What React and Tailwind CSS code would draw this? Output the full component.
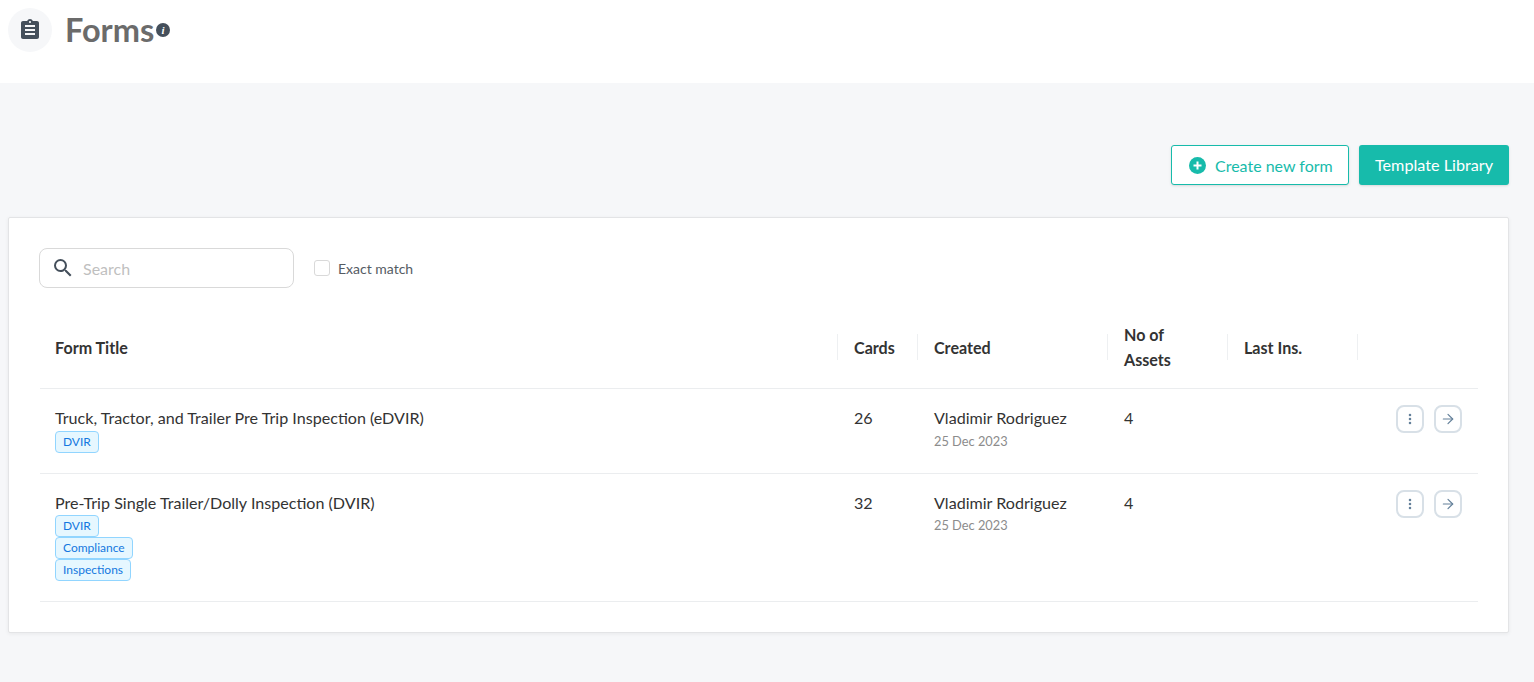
import React from "react";
import { ArrowRight, MoreVertical } from "lucide-react";

const COLS = "grid grid-cols-[798px_80px_190px_120px_130px_120px]";

const forms = [
  { title: "Truck, Tractor, and Trailer Pre Trip Inspection (eDVIR)", tags: ["DVIR"], cards: 26, by: "Vladimir Rodriguez", date: "25 Dec 2023", assets: 4, height: "h-[84.6px]" },
  { title: "Pre-Trip Single Trailer/Dolly Inspection (DVIR)", tags: ["DVIR", "Compliance", "Inspections"], cards: 32, by: "Vladimir Rodriguez", date: "25 Dec 2023", assets: 4, height: "h-[128.2px]" },
];

function HeaderCell({ children, last, first, two }) {
  return (
    <div className={`flex h-[26px] items-center ${first ? "px-[15px]" : "px-4"} leading-[25.6px] ${last ? "" : "border-r border-[#eef0f2]"}`}>
      <span className={two ? "" : "pt-[2px]"}>{children}</span>
    </div>
  );
}

function FormRow({ form }) {
  return (
    <div className={`${COLS} ${form.height} border-b border-[#ebedef] pt-[16px] text-[16.1px] text-[#333333]`}>
      <div className="px-[15px]">
        <div className="h-[25.6px] leading-[25.6px]">{form.title}</div>
        <div className="flex flex-col items-start">
          {form.tags.map((tag) => (
            <span key={tag} className="flex h-[22px] items-center rounded-[4px] border border-[#91d5ff] bg-[#e6f7ff] px-[7px] text-[12px] text-[#1477e0]">
              {tag}
            </span>
          ))}
        </div>
      </div>
      <div className="px-4 leading-[25.6px]">{form.cards}</div>
      <div className="px-4">
        <div className="h-[25.6px] leading-[25.6px]">{form.by}</div>
        <div className="text-[12.8px] leading-[20px] text-[#8c8c8c]">{form.date}</div>
      </div>
      <div className="px-4 leading-[25.6px]">{form.assets}</div>
      <div />
      <div className="flex items-start justify-end gap-[10px] pr-4">
        <button className="flex h-[28px] w-[28px] items-center justify-center rounded-[8px] border-2 border-[#d8e0e7] text-[#64809a]">
          <MoreVertical size={14} strokeWidth={2.4} />
        </button>
        <button className="flex h-[28px] w-[28px] items-center justify-center rounded-[8px] border-2 border-[#d8e0e7] text-[#64809a]">
          <ArrowRight size={16} strokeWidth={1.8} />
        </button>
      </div>
    </div>
  );
}

export default function App() {
  return (
    <div className="min-h-screen bg-[#f6f7f9] font-['Lato',sans-serif]">
      {/* Header */}
      <div className="flex h-[83px] items-start bg-white pl-2 pt-2">
        <div className="flex h-11 w-11 items-center justify-center rounded-full bg-[#f6f7f9]">
          <svg width="24" height="24" viewBox="0 0 24 24" fill="#444f5b">
            <path d="M19 3h-4.18C14.4 1.84 13.3 1 12 1s-2.4.84-2.82 2H5c-1.1 0-2 .9-2 2v14c0 1.1.9 2 2 2h14c1.1 0 2-.9 2-2V5c0-1.1-.9-2-2-2zm-7 0c.55 0 1 .45 1 1s-.45 1-1 1-1-.45-1-1 .45-1 1-1zm5 14H7v-2h10v2zm0-4H7v-2h10v2zm0-4H7V7h10v2z" />
          </svg>
        </div>
        <h1 className="ml-[13px] text-[32.5px] font-bold leading-[44px] text-[#6b6b6b]">Forms</h1>
        <svg className="ml-[2px] mt-[15px]" width="14" height="14" viewBox="0 0 14 14">
          <circle cx="7" cy="7" r="7" fill="#444f5b" />
          <text x="7" y="11" textAnchor="middle" fontSize="11" fontWeight="700" fontStyle="italic" fontFamily="Liberation Serif, serif" fill="#fff">i</text>
        </svg>
      </div>

      {/* Actions */}
      <div className="flex justify-end gap-[10px] pr-[25px] pt-[62px]">
        <button className="flex h-10 w-[178px] items-center gap-[9px] rounded-[3px] border border-[#17bbab] bg-white pl-[17px] pt-px text-[16px] text-[#17bbab] shadow-sm">
          <svg width="17" height="17" viewBox="0 0 17 17" className="-mt-px">
            <circle cx="8.5" cy="8.5" r="8.5" fill="#17bbab" />
            <path d="M8.5 4.5v8M4.5 8.5h8" stroke="#fff" strokeWidth="2" />
          </svg>
          Create new form
        </button>
        <button className="h-10 w-[150px] rounded-[3px] bg-[#17bbab] pt-px text-[16.2px] text-white shadow-sm">
          Template Library
        </button>
      </div>

      {/* Card */}
      <div className="ml-2 mt-8 h-[416px] w-[1501px] rounded-[2px] border border-[#e3e4e6] bg-white pl-[30px] pt-[30px] shadow-[0_1px_4px_rgba(0,0,0,0.06)]">
        <div className="flex items-center">
          <div className="flex h-10 w-[255px] items-center rounded-[8px] border border-[#d9d9d9] pl-[11px]">
            <svg width="24" height="24" viewBox="0 0 24 24" fill="#444f5b">
              <path d="M15.5 14h-.79l-.28-.27A6.47 6.47 0 0 0 16 9.5 6.5 6.5 0 1 0 9.5 16c1.61 0 3.09-.59 4.23-1.57l.27.28v.79l5 4.99L20.49 19l-4.99-5zm-6 0C7.01 14 5 11.99 5 9.5S7.01 5 9.5 5 14 7.01 14 9.5 11.99 14 9.5 14z" />
            </svg>
            <span className="ml-[8px] pt-px text-[16px] text-[#bfbfbf]">Search</span>
          </div>
          <span className="ml-5 h-4 w-4 rounded-[3px] border border-[#d9d9d9]" />
          <span className="ml-2 text-[14px] text-[#555b63]">Exact match</span>
        </div>

        <div className="ml-px mt-[28px] w-[1438px]">
          <div className={`${COLS} h-[73.2px] items-center border-b border-[#ebedef] pb-[10px] text-[16.1px] font-bold text-[#333333]`}>
            <HeaderCell first>Form Title</HeaderCell>
            <HeaderCell>Cards</HeaderCell>
            <HeaderCell>Created</HeaderCell>
            <HeaderCell two>No of<br />Assets</HeaderCell>
            <HeaderCell>Last Ins.</HeaderCell>
            <HeaderCell last />
          </div>
          {forms.map((form) => (
            <FormRow key={form.title} form={form} />
          ))}
        </div>
      </div>
    </div>
  );
}
